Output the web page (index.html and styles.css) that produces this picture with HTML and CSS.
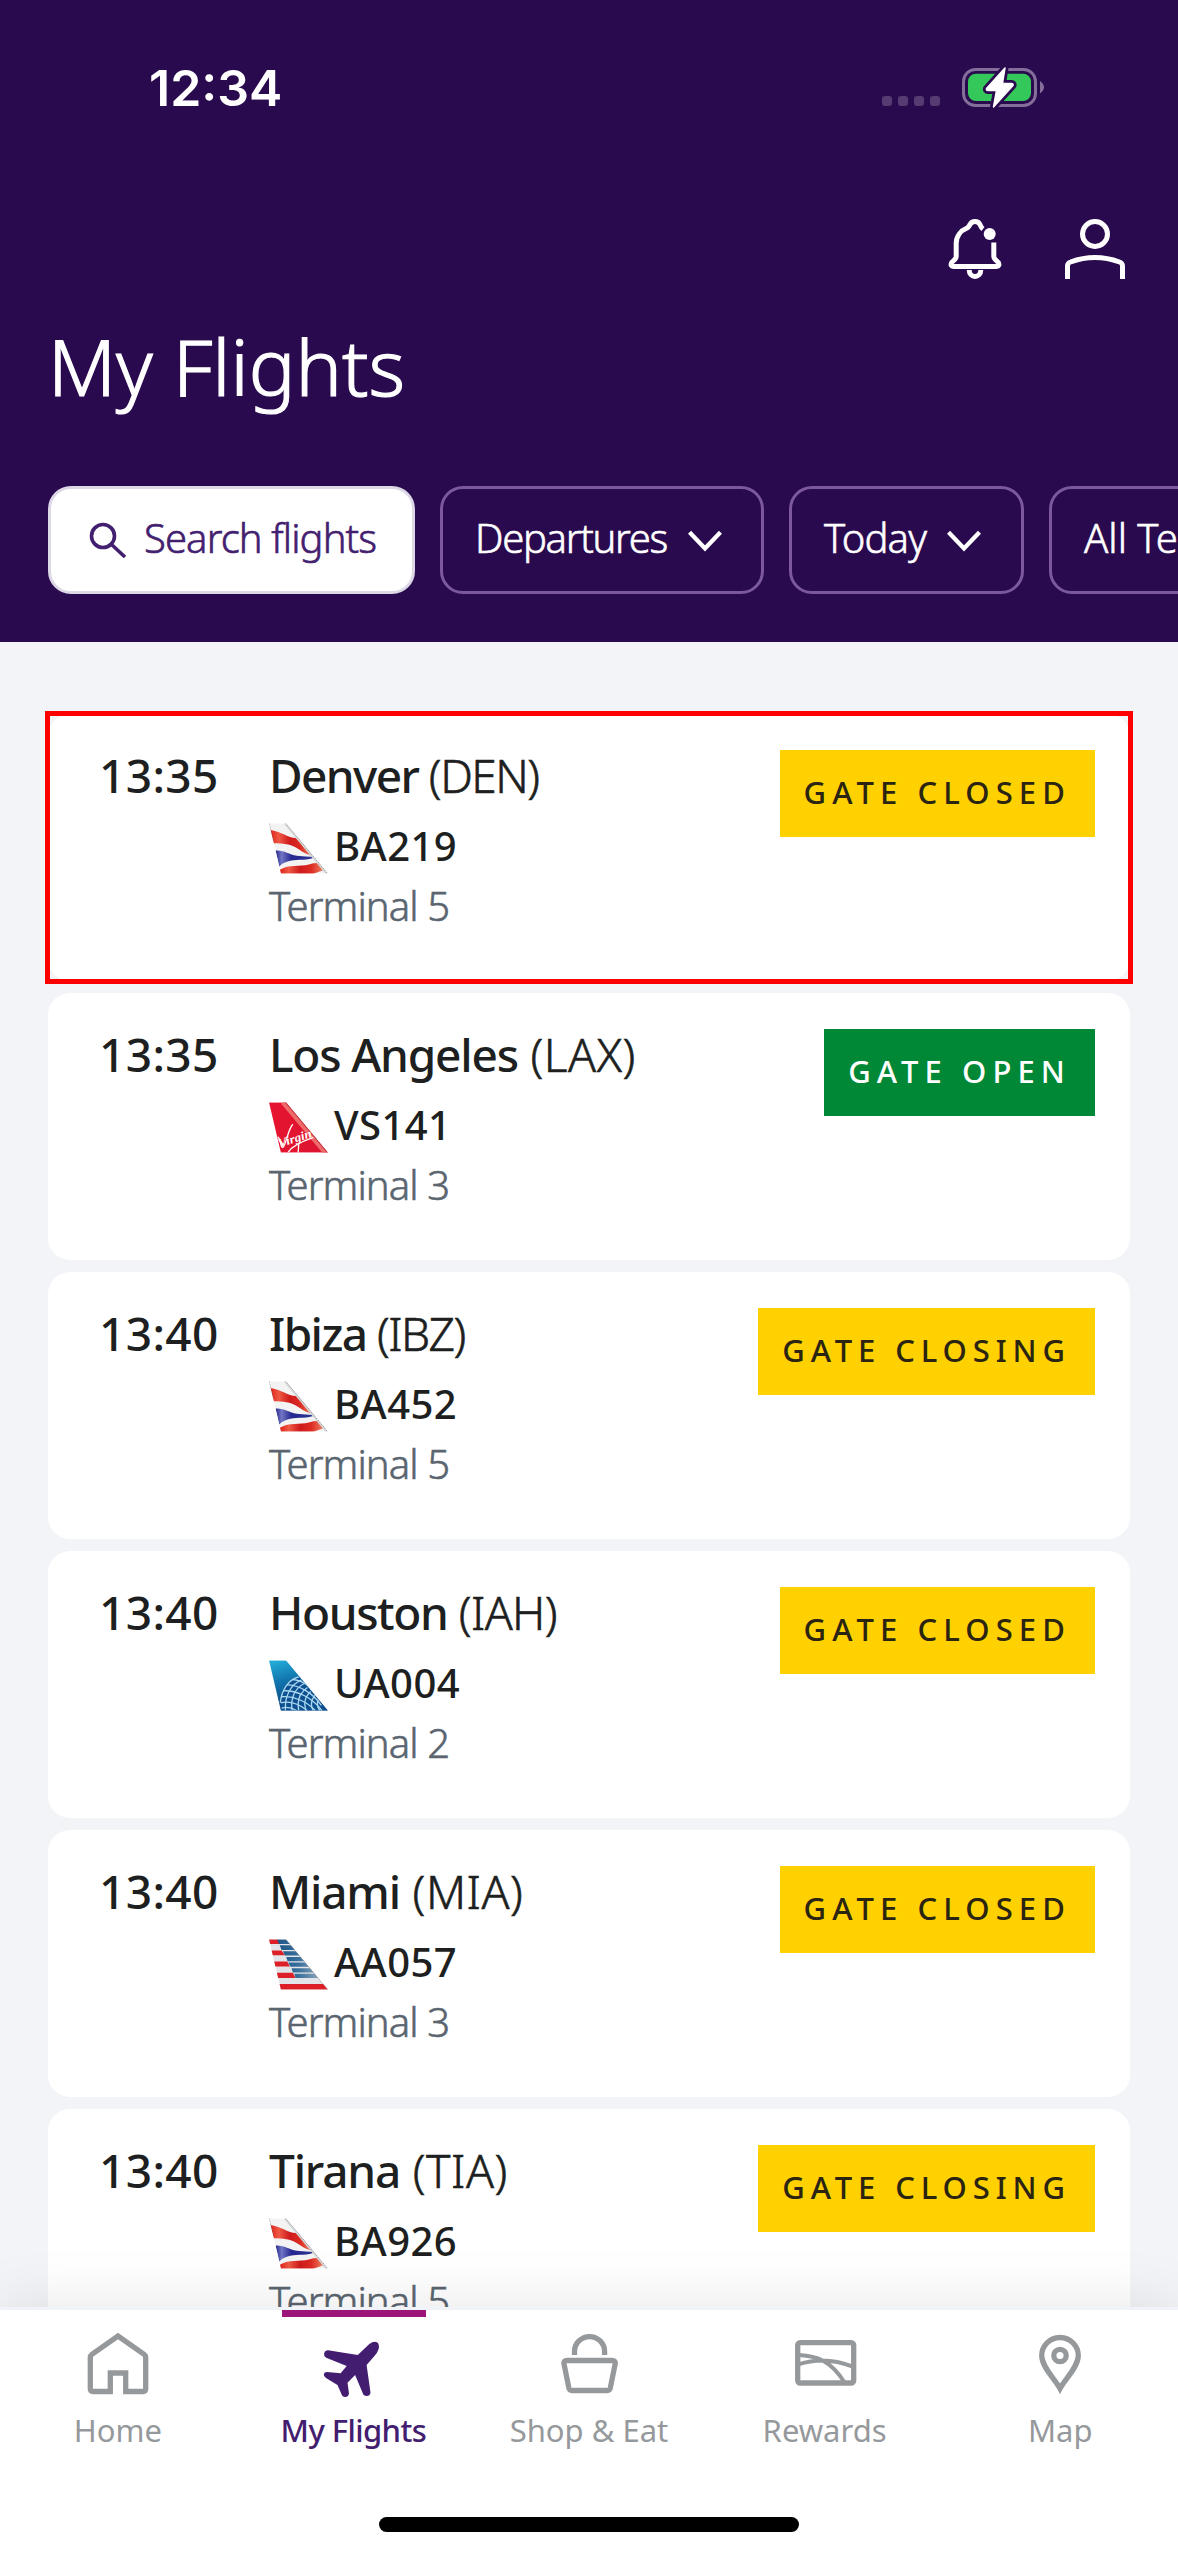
FILE: index.html
```html
<!DOCTYPE html>
<html lang="en">
<head>
<meta charset="utf-8">
<title>My Flights</title>
<link rel="stylesheet" href="styles.css">
</head>
<body>
<svg class="defs" width="0" height="0">
  <defs>
    <clipPath id="tail"><path d="M0 0H51L178 152H36Z"/></clipPath>
    <linearGradient id="baRed"><stop offset="0" stop-color="#e0201c"/><stop offset=".2" stop-color="#ee5a44"/><stop offset=".45" stop-color="#cf1a1c"/><stop offset=".7" stop-color="#dc2c22"/><stop offset="1" stop-color="#f08a68"/></linearGradient>
    <linearGradient id="baBlue"><stop offset="0" stop-color="#23268a"/><stop offset=".15" stop-color="#7276c4"/><stop offset=".4" stop-color="#25288f"/><stop offset="1" stop-color="#2f3596"/></linearGradient>
    <linearGradient id="uaSky" x2=".3" y2="1"><stop offset="0" stop-color="#23b1dc"/><stop offset=".45" stop-color="#1173ab"/><stop offset="1" stop-color="#0b3f7c"/></linearGradient>
    <linearGradient id="vsRed"><stop offset="0" stop-color="#e6142f"/><stop offset="1" stop-color="#dc1430"/></linearGradient>
    <linearGradient id="aaBlue"><stop offset="0" stop-color="#1d5686"/><stop offset=".5" stop-color="#376f9c"/><stop offset="1" stop-color="#8ea5b8"/></linearGradient>
    <symbol id="ba" viewBox="0 0 178 152">
      <g clip-path="url(#tail)">
        <path fill="#f3f3f3" d="M0 0H178V152H0Z"/>
        <path fill="url(#baRed)" d="M4 20C24 22 50 36 66 42C76 44 84 44 92 48L134 99C112 94 98 84 86 76C66 62 40 60 14 60Z"/>
        <path fill="url(#baBlue)" d="M20 82C44 80 60 94 84 98Q108 101 140 102C116 114 90 108 64 113Q42 118 31 130Z"/>
        <path fill="url(#baRed)" d="M35 152L33 140C62 122 92 132 120 124Q140 118 152 120L168 140L134 152Z"/>
        <path fill="none" stroke="#d4d7da" stroke-width="7" d="M48 0L175 152"/>
        <path fill="none" stroke="#666" stroke-width="3" stroke-dasharray="4 4" d="M51 0L178 152M0 0L12 50"/>
      </g>
    </symbol>
    <symbol id="vs" viewBox="0 0 178 152">
      <g clip-path="url(#tail)">
        <path fill="url(#vsRed)" d="M0 0H178V152H0Z"/>
        <path fill="none" stroke="#ef6a6a" stroke-width="14" d="M42 0L170 152"/>
        <path fill="none" stroke="#bb3038" stroke-width="5" d="M51 0L178 152"/>
        <text class="tail-script" x="32" y="136" transform="rotate(-18 32 136)" textLength="104" lengthAdjust="spacingAndGlyphs">Virgin</text>
        <path fill="none" stroke="#fff" stroke-width="4" d="M26 104C36 108 34 138 42 136S58 78 72 66M58 150C70 132 100 118 134 106M90 122L88 152"/>
      </g>
    </symbol>
    <symbol id="ua" viewBox="0 0 178 152">
      <g clip-path="url(#tail)">
        <path fill="url(#uaSky)" d="M0 0H178V152H0Z"/>
        <path fill="#0d4f8f" d="M34 128C38 90 58 58 90 50L178 152H36Z"/>
        <g fill="none" stroke="#a9d8f1" stroke-width="4">
          <path d="M34 128C38 90 58 58 90 50M50 152C46 112 64 72 98 60M70 152C64 118 76 86 106 70M90 152C84 124 92 98 116 82M112 152C104 130 108 110 126 94M134 152C124 136 126 122 138 106M154 152Q142 138 148 120"/>
          <path d="M70 58C100 60 130 80 150 112M54 74C90 74 132 98 158 136M44 92C84 90 130 112 160 152M38 110C76 106 116 126 140 152M36 128C66 122 94 134 116 152M38 144Q62 138 84 152"/>
        </g>
      </g>
    </symbol>
    <symbol id="aa" viewBox="0 0 178 152">
      <g clip-path="url(#tail)">
        <path fill="#e2e4e8" d="M0 0H178V152H0Z"/>
        <path fill="#dd2027" d="M0 0H26L32 14H0ZM0 34H38L48 48H0ZM0 67H55L63 82H0ZM0 101H72L80 117H0ZM0 135H178V152H0Z"/>
        <path fill="url(#aaBlue)" d="M24 0H58L68 14H30ZM32 18H72L84 32H38ZM42 36H88L98 49H48ZM52 53H98L112 66H56ZM58 70H112L126 83H65ZM68 87H128L140 100H72ZM76 104H140L152 117H80Z"/>
        <path fill="none" stroke="#888f99" stroke-width="3" d="M51 0L178 152"/>
      </g>
    </symbol>
    <symbol id="chevron" viewBox="0 0 34 22"><path fill="none" stroke="currentColor" stroke-width="4.4" d="M1.5 2.2L17 18.4L32.5 2.2"/></symbol>
  </defs>
</svg>

<div class="app">
  <header class="header">
    <div class="status">
      <span class="clock">12:34</span>
      <div class="status-icons">
        <div class="signal"><i></i><i></i><i></i><i></i></div>
        <svg class="battery" width="82" height="42" viewBox="0 0 82 42">
          <rect x="1.5" y="3.5" width="72" height="36" rx="12" fill="none" stroke="#846d9b" stroke-width="3"/>
          <path fill="#846d9b" d="M78 15Q82 18 82 21.300T78 27.500Z"/>
          <rect x="6" y="7.700" width="63" height="27.300" rx="8" fill="#34c759"/>
          <path d="M43 2L24.500 22.500Q24 24.500 26 24.500H34.500L31.500 41L51 19.500Q51.500 17.500 49.500 17.500H40.500Z" fill="#2a0a4e" stroke="#2a0a4e" stroke-width="7" stroke-linejoin="round"/>
          <path d="M43 2L24.500 22.500Q24 24.500 26 24.500H34.500L31.500 41L51 19.500Q51.500 17.500 49.500 17.500H40.500Z" fill="#fff" stroke="#fff" stroke-width="1.500" stroke-linejoin="round"/>
        </svg>
      </div>
    </div>
    <div class="actions">
      <svg width="60" height="60" viewBox="0 0 60 60" fill="none" stroke="#fff" stroke-width="5">
        <path d="M48.800 23.500V37.500Q48.800 39.200 50.300 40.500L53.400 43.600Q55 47.500 51.500 47.500H8.500Q5 47.500 6.600 43.600L9.700 40.500Q11.200 39.200 11.200 37.500V24.500C11.200 17 16 11.500 22 9C24 8 24.300 6.500 25 5.500C27 1.500 33 1.500 35 5.500C35.700 7 36 8.500 38 10"/>
        <path d="M24.200 51C24.200 59.500 35.800 59.500 35.800 51"/>
        <circle cx="44.700" cy="15" r="6" fill="#fff" stroke="none"/>
      </svg>
      <svg width="60" height="60" viewBox="0 0 60 60" fill="none" stroke="#fff" stroke-width="5">
        <circle cx="30" cy="15" r="12.500"/>
        <path d="M2.500 60V47Q2.500 44 5.500 43Q30 34 54.500 43Q57.500 44 57.500 47V60"/>
      </svg>
    </div>
    <h1 class="title">My Flights</h1>
    <div class="filters">
      <div class="chip chip-search">
        <svg width="38" height="36" viewBox="0 0 38 36" fill="none" stroke="#43206f" stroke-width="3.600"><circle cx="14" cy="14" r="11.500"/><path d="M22 22L36 35"/></svg>
        <span>Search flights</span>
      </div>
      <div class="chip chip-departures"><span>Departures</span><svg width="34" height="22"><use href="#chevron"/></svg></div>
      <div class="chip chip-day"><span>Today</span><svg width="34" height="22"><use href="#chevron"/></svg></div>
      <div class="chip chip-terminal"><span>All Terminals</span></div>
    </div>
  </header>

  <main class="flights">
    <article class="card selected">
      <time class="time">13:35</time>
      <div class="info">
        <div class="city tight"><b>Denver</b> <span>(DEN)</span></div>
        <div class="flight"><svg width="59" height="51"><use href="#ba"/></svg>BA219</div>
        <div class="terminal">Terminal 5</div>
      </div>
      <div class="badge">GATE CLOSED</div>
    </article>
    <article class="card">
      <time class="time">13:35</time>
      <div class="info">
        <div class="city wide"><b>Los Angeles</b> <span>(LAX)</span></div>
        <div class="flight"><svg width="59" height="51"><use href="#vs"/></svg>VS141</div>
        <div class="terminal">Terminal 3</div>
      </div>
      <div class="badge open">GATE OPEN</div>
    </article>
    <article class="card">
      <time class="time">13:40</time>
      <div class="info">
        <div class="city tight"><b>Ibiza</b> <span>(IBZ)</span></div>
        <div class="flight"><svg width="59" height="51"><use href="#ba"/></svg>BA452</div>
        <div class="terminal">Terminal 5</div>
      </div>
      <div class="badge closing">GATE CLOSING</div>
    </article>
    <article class="card">
      <time class="time">13:40</time>
      <div class="info">
        <div class="city"><b>Houston</b> <span>(IAH)</span></div>
        <div class="flight"><svg width="59" height="51"><use href="#ua"/></svg>UA004</div>
        <div class="terminal">Terminal 2</div>
      </div>
      <div class="badge">GATE CLOSED</div>
    </article>
    <article class="card">
      <time class="time">13:40</time>
      <div class="info">
        <div class="city wide"><b>Miami</b> <span>(MIA)</span></div>
        <div class="flight"><svg width="59" height="51"><use href="#aa"/></svg>AA057</div>
        <div class="terminal">Terminal 3</div>
      </div>
      <div class="badge">GATE CLOSED</div>
    </article>
    <article class="card">
      <time class="time">13:40</time>
      <div class="info">
        <div class="city wide"><b>Tirana</b> <span>(TIA)</span></div>
        <div class="flight"><svg width="59" height="51"><use href="#ba"/></svg>BA926</div>
        <div class="terminal">Terminal 5</div>
      </div>
      <div class="badge closing">GATE CLOSING</div>
    </article>
  </main>

  <nav class="nav">
    <div class="tabs">
      <div class="tab">
        <svg viewBox="0 0 72 72"><path d="M28.300 64.500H11Q8.300 64.500 8.300 61.800V30.500Q8.300 28.500 9.900 27.300L36 9L62.100 27.300Q63.700 28.500 63.700 30.500V61.800Q63.700 64.500 61 64.500H43.700V46H28.300Z"/></svg>
        <span>Home</span>
      </div>
      <div class="tab active">
        <svg viewBox="0 0 72 72"><path class="solid" d="M52.300 17Q57 13.500 60 15.200Q62.500 17 61.800 21.500Q60.500 26 57 29.500L49.600 38L53.500 65.500Q53 69 49.600 69Q46.500 69 45.800 66.300L38.100 48L30.500 55.700L32 66.500Q31.300 70 28.200 70Q25.300 70 24.400 67L20.500 58L9 51Q6.500 49.500 6.800 47.300Q7.200 45 10 45L23.600 46.300L29.700 39L9.200 30.700Q6.500 29 7.100 26.500Q8 23.200 11 23.200L40.800 28Z"/></svg>
        <span>My Flights</span>
      </div>
      <div class="tab">
        <svg viewBox="0 0 72 72"><path d="M14 33.500H59Q62.800 33.500 62.200 36.800L57.300 61Q56.700 63.500 54.200 63.500H19Q16.500 63.500 15.900 61L11 36.800Q10.400 33.500 14 33.500ZM21.500 28V24.600A15 15 0 0 1 51.600 24.600V28"/></svg>
        <span>Shop &amp; Eat</span>
      </div>
      <div class="tab">
        <svg viewBox="0 0 72 72"><rect x="8.700" y="15.600" width="56" height="40.400" rx="2.500"/><path class="fine" d="M10 28Q25 29 33.600 33.500Q46 40 55.500 55.500M10 37.200Q36 28.500 64 39.700"/></svg>
        <span>Rewards</span>
      </div>
      <div class="tab">
        <svg viewBox="0 0 72 72"><path d="M36 61.500C31 52 17.700 40 17.700 28.500A18.300 18 0 0 1 54.300 28.500C54.300 40 41 52 36 61.500Z"/><circle cx="36" cy="28.500" r="6.200"/></svg>
        <span>Map</span>
      </div>
    </div>
    <div class="home-bar"></div>
  </nav>
</div>
</body>
</html>
```
FILE: styles.css
```css
* { box-sizing: border-box; }

body {
  margin: 0;
  font-family: "Noto Sans", "Liberation Sans", sans-serif;
  color: #1d1f20;
}

svg { display: block; flex: none; }
.defs { position: absolute; }

.app {
  width: 1178px;
  height: 2556px;
  display: flex;
  flex-direction: column;
  overflow: hidden;
  background: #f2f4f8;
}

/* Header */
.header {
  flex: none;
  height: 642px;
  overflow: hidden;
  background: #2a0a4e;
  color: #fff;
}

.status {
  height: 219px;
  padding: 66px 134px 0 149px;
  display: flex;
  justify-content: space-between;
  align-items: flex-start;
}

.clock {
  font: 600 50px/44px Inter, sans-serif;
}

.status-icons { display: flex; gap: 22px; }
.signal { display: flex; gap: 6px; padding-top: 30px; }
.signal i { width: 10px; height: 10px; border-radius: 3px; background: #553b71; }

.actions {
  display: flex;
  justify-content: flex-end;
  gap: 60px;
  padding-right: 53px;
}

.title {
  margin: 37px 0 0 48px;
  font-size: 78px;
  line-height: 100px;
  font-weight: 300;
  -webkit-text-stroke: 1.2px currentColor;
}

.filters {
  display: flex;
  gap: 25px;
  margin: 70px 0 0 48px;
}

.chip {
  flex: none;
  height: 108px;
  display: flex;
  align-items: center;
  border: 3px solid #7c589f;
  border-radius: 23px;
  padding-left: 32px;
  font-size: 40px;
  font-weight: 300;
  white-space: nowrap;
  -webkit-text-stroke: 0.6px currentColor;
}
.chip span { padding-bottom: 6px; }
.chip svg { margin-top: 1px; }

.chip-search {
  width: 367px;
  padding-left: 38px;
  gap: 17px;
  background: #fff;
  border-color: #dcd8e6;
  color: #43206f;
  letter-spacing: -0.9px;
}
.chip-search svg { margin-top: 0; }
.chip-departures { width: 324px; gap: 21px; letter-spacing: -1.3px; }
.chip-day { width: 235px; gap: 21px; letter-spacing: -0.8px; }
.chip-terminal { width: 400px; letter-spacing: 0; }

/* Flight list */
.flights {
  flex: 1;
  min-height: 0;
  overflow: hidden;
  padding: 72px 48px 0;
  display: flex;
  flex-direction: column;
  gap: 12px;
}

.card {
  position: relative;
  flex: none;
  height: 267px;
  padding: 36px 35px 0 51px;
  display: flex;
  align-items: flex-start;
  background: #fff;
  border-radius: 22px;
}

.selected::after {
  content: "";
  position: absolute;
  inset: -3px;
  border: 5px solid #f00;
}

.time {
  width: 170px;
  font-size: 46px;
  line-height: 50px;
  font-weight: 500;
  letter-spacing: 0.4px;
}

.info { flex: 1; }
.city {
  font-size: 46px;
  line-height: 50px;
  font-weight: 300;
  letter-spacing: -0.6px;
}
.city span { -webkit-text-stroke: 0.6px currentColor; }
.city b { font-weight: 500; letter-spacing: -1.4px; }
.wide { letter-spacing: 0.6px; }
.wide b { letter-spacing: -1.2px; }
.tight { letter-spacing: -1.5px; }
.tight b { letter-spacing: -1.6px; }

.flight {
  margin-top: 20px;
  height: 52px;
  display: flex;
  gap: 6px;
  font-size: 40px;
  line-height: 52px;
  font-weight: 500;
  letter-spacing: 0.4px;
}
.flight svg { margin-top: 3px; }

.tail-script {
  font: italic 700 36px "Liberation Serif", serif;
  letter-spacing: 0;
  fill: #fff;
}

.terminal {
  margin-top: 9px;
  font-size: 40px;
  line-height: 50px;
  font-weight: 300;
  color: #5a6570;
  letter-spacing: -0.9px;
  -webkit-text-stroke: 0.6px currentColor;
}

.badge {
  height: 87px;
  padding: 0 24px 3px;
  line-height: 84px;
  font-size: 31px;
  font-weight: 500;
  letter-spacing: 6.1px;
  background: #ffd100;
  color: #2a2410;
}
.closing { letter-spacing: 5.9px; }
.open { background: #008837; color: #fff; }

/* Bottom navigation */
.nav {
  position: relative;
  flex: none;
  height: 249px;
  border-top: 3px solid #f0f3f8;
  background: #fff;
  box-shadow: 0 0 60px rgba(0, 0, 0, .1);
}

.tabs { display: grid; grid-template-columns: repeat(5, 1fr); }

.tab {
  position: relative;
  display: flex;
  flex-direction: column;
  align-items: center;
  padding-top: 17px;
  gap: 11px;
  font-size: 31px;
  line-height: 40px;
  color: #96999c;
}
.tab svg {
  width: 72px;
  height: 72px;
  fill: none;
  stroke: #96999c;
  stroke-width: 5.3;
}
.tab .fine { stroke-width: 4; }
.tab .solid { fill: #431d70; stroke: none; }

.active { color: #431d70; font-weight: 500; letter-spacing: -0.6px; }
.active::before {
  content: "";
  position: absolute;
  top: 0;
  left: 46px;
  width: 144px;
  height: 7px;
  background: #9c1578;
}

.home-bar {
  width: 420px;
  height: 15px;
  margin: 67px auto 0;
  border-radius: 8px;
  background: #000;
}
```
